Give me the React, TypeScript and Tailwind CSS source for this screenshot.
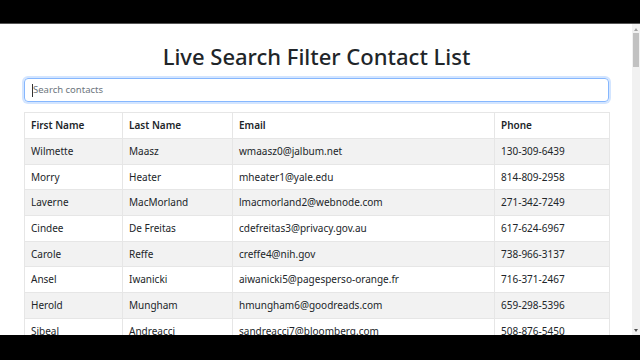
import React from "react";

const contacts = [
  ["Wilmette", "Maasz", "wmaasz0@jalbum.net", "130-309-6439"],
  ["Morry", "Heater", "mheater1@yale.edu", "814-809-2958"],
  ["Laverne", "MacMorland", "lmacmorland2@webnode.com", "271-342-7249"],
  ["Cindee", "De Freitas", "cdefreitas3@privacy.gov.au", "617-624-6967"],
  ["Carole", "Reffe", "creffe4@nih.gov", "738-966-3137"],
  ["Ansel", "Iwanicki", "aiwanicki5@pagesperso-orange.fr", "716-371-2467"],
  ["Herold", "Mungham", "hmungham6@goodreads.com", "659-298-5396"],
  ["Sibeal", "Andreacci", "sandreacci7@bloomberg.com", "508-876-5450"],
  ["Kit", "Bulfoot", "kbulfoot8@ning.com", "348-117-7316"],
];

export default function App() {
  return (
    <div
      className="w-[640px] h-[360px] flex flex-col overflow-hidden bg-black text-[#212529]"
      style={{ fontFamily: '"Noto Sans", "Open Sans", sans-serif' }}
    >
      <div className="h-[24px] shrink-0 bg-black border-b border-[#555]" />
      <div className="flex-1 flex flex-row min-h-0 bg-white">
        <div className="flex-1 min-w-0 overflow-hidden pl-[24px] pr-[23px]">
          <h1 className="mt-[18px] text-center text-[22px] leading-[29px] font-medium text-[#212529]">
            Live Search Filter Contact List
          </h1>
          <div className="mt-[7px] h-[24px] rounded-[4px] border border-[#86b7fe] shadow-[0_0_0_2px_rgba(13,110,253,0.18)] flex items-center pl-[7px]">
            <span className="w-px h-[13px] bg-[#333]" />
            <span className="text-[9.5px] text-[#6c757d]">Search contacts</span>
          </div>
          <table className="mt-[10px] w-full border-collapse text-[10px] table-fixed">
            <colgroup>
              <col className="w-[98px]" />
              <col className="w-[110px]" />
              <col className="w-[262px]" />
              <col className="w-[115px]" />
            </colgroup>
            <thead>
              <tr className="h-[26px]">
                {["First Name", "Last Name", "Email", "Phone"].map((h) => (
                  <th
                    key={h}
                    className="border border-[#e6e6e6] px-[6px] text-left font-semibold text-[#212529]"
                  >
                    {h}
                  </th>
                ))}
              </tr>
            </thead>
            <tbody>
              {contacts.map((c, i) => (
                <tr key={i} className={`h-[25.7px] ${i % 2 === 0 ? "bg-[#f2f2f2]" : "bg-white"}`}>
                  {c.map((v, j) => (
                    <td key={j} className="border border-[#e6e6e6] px-[6px] whitespace-nowrap">
                      {v}
                    </td>
                  ))}
                </tr>
              ))}
            </tbody>
          </table>
        </div>
        <div className="w-[8px] shrink-0 bg-[#f1f1f1] flex flex-col items-center pt-[4px]">
          <div className="w-0 h-0 border-l-[2px] border-r-[2px] border-b-[3px] border-l-transparent border-r-transparent border-b-[#a3a3a3]" />
          <div className="mt-[2px] w-[6px] h-[34px] bg-[#c1c1c1]" />
          <div className="flex-1" />
          <div className="mb-[3px] w-0 h-0 border-l-[2px] border-r-[2px] border-t-[3px] border-l-transparent border-r-transparent border-t-[#505050]" />
        </div>
      </div>
      <div className="h-[25px] shrink-0 bg-black" />
    </div>
  );
}
